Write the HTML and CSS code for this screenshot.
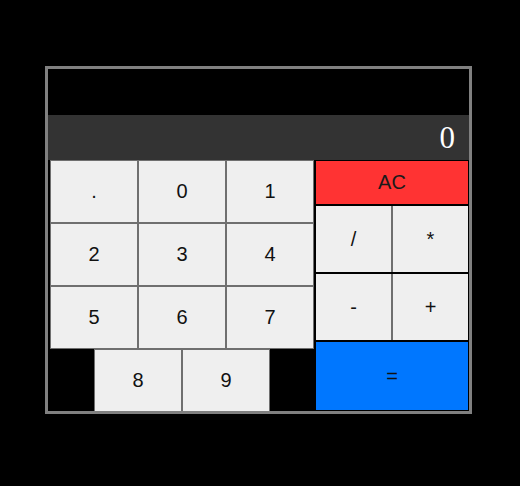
FILE: index.html
```html
<!DOCTYPE html>
<html>
<head>
<meta charset="utf-8">
<link rel="stylesheet" href="styles.css">
</head>
<body>
<div class="calc">
  <div class="top"></div>
  <div class="display">0</div>
  <div class="pad">
    <div class="nums">
      <div class="grid">
        <div class="key">.</div>
        <div class="key">0</div>
        <div class="key">1</div>
        <div class="key">2</div>
        <div class="key">3</div>
        <div class="key">4</div>
        <div class="key">5</div>
        <div class="key">6</div>
        <div class="key">7</div>
      </div>
      <div class="lastrow">
        <div class="key">8</div>
        <div class="key">9</div>
      </div>
    </div>
    <div class="ops">
      <div class="ac">AC</div>
      <div class="oprow r1">
        <div class="op">/</div>
        <div class="op">*</div>
      </div>
      <div class="oprow r2">
        <div class="op">-</div>
        <div class="op">+</div>
      </div>
      <div class="eq">=</div>
    </div>
  </div>
</div>
</body>
</html>
```
FILE: styles.css
```css
html, body {
  margin: 0;
  background: #000;
}
body {
  padding: 66px 0 0 45px;
  font-family: "Liberation Sans", Arial, sans-serif;
  font-size: 20px;
  color: #111;
}
.calc {
  width: 421px;
  border: 3px solid #808080;
  background: #000;
}
.top {
  height: 46px;
}
.display {
  height: 45px;
  background: #333;
  color: #fff;
  font-family: "Liberation Serif", "Times New Roman", serif;
  font-size: 31px;
  line-height: 45px;
  text-align: right;
  padding-right: 14px;
  box-sizing: border-box;
}
.pad {
  display: flex;
  padding-left: 2px;
}
.nums {
  width: 264px;
}
.grid {
  display: grid;
  grid-template-columns: repeat(3, 88px);
  grid-auto-rows: 63px;
}
.key, .op, .ac, .eq {
  display: flex;
  align-items: center;
  justify-content: center;
  box-sizing: border-box;
}
.key {
  background: #efefef;
  border: 1px solid #6f6f6f;
  width: 88px;
  height: 63px;
}
.lastrow {
  display: flex;
  justify-content: center;
  height: 62px;
}
.lastrow .key {
  height: 62px;
  border-bottom: none;
}
.ops {
  width: 155px;
  padding-left: 1px;
  box-sizing: border-box;
  display: flex;
  flex-direction: column;
}
.ac {
  height: 45px;
  background: #ff3333;
  border: 1px solid #000;
  color: #1a1a1a;
}
.oprow {
  display: flex;
  height: 68px;
  border: 1px solid #000;
  box-sizing: border-box;
}
.op {
  flex: 1;
  background: #efefef;
  border-left: 1px solid #6f6f6f;
  border-right: 1px solid #6f6f6f;
}
.op:first-child {
  border-left: none;
}
.op:last-child {
  border-right: none;
}
.eq {
  height: 70px;
  background: #0077ff;
  border: 1px solid #000;
  color: #111;
}
```
